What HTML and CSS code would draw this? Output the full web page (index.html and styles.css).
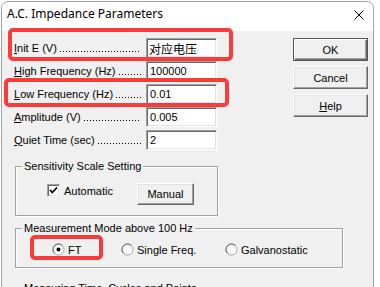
FILE: index.html
```html
<!DOCTYPE html>
<html lang="en">
<head>
    <meta charset="UTF-8">
    <meta name="viewport" content="width=device-width, initial-scale=1.0">
    <title>A.C. Impedance Parameters</title>
    <link rel="stylesheet" href="styles.css">
</head>
<body>
    <div class="window">
        <div class="titlebar">
            <span class="title">A.C. Impedance Parameters</span>
            <svg class="close" width="10" height="10" viewBox="0 0 10 10">
                <path d="M0.5 0.5 L9.5 9.5 M9.5 0.5 L0.5 9.5" stroke="#000" stroke-width="1" fill="none"/>
            </svg>
        </div>

        <div class="client">
            <div class="top">
                <div class="fields">
                    <div class="row">
                        <label class="lbl"><span><u>I</u>nit E (V)</span><span class="leader"></span></label>
                        <input class="edit edit-cjk" type="text" value="对应电压">
                    </div>
                    <div class="row">
                        <label class="lbl"><span><u>H</u>igh Frequency (Hz)</span><span class="leader"></span></label>
                        <input class="edit" type="text" value="100000">
                    </div>
                    <div class="row">
                        <label class="lbl"><span><u>L</u>ow Frequency (Hz)</span><span class="leader"></span></label>
                        <input class="edit" type="text" value="0.01">
                    </div>
                    <div class="row">
                        <label class="lbl"><span><u>A</u>mplitude (V)</span><span class="leader"></span></label>
                        <input class="edit" type="text" value="0.005">
                    </div>
                    <div class="row">
                        <label class="lbl"><span><u>Q</u>uiet Time (sec)</span><span class="leader"></span></label>
                        <input class="edit" type="text" value="2">
                    </div>
                </div>
                <div class="buttons">
                    <button class="btn btn-default">OK</button>
                    <button class="btn">Cancel</button>
                    <button class="btn"><u>H</u>elp</button>
                </div>
            </div>

            <div class="group group-sens">
                <span class="group-title">Sensitivity Scale Setting</span>
                <div class="group-row">
                    <label class="check">
                        <span class="box">
                            <svg width="9" height="9" viewBox="0 0 9 9">
                                <path d="M1 4 L3.3 6.5 L8 1.5" stroke="#000" stroke-width="1.8" fill="none"/>
                            </svg>
                        </span>
                        Automatic
                    </label>
                    <button class="btn btn-small">Manual</button>
                </div>
            </div>

            <div class="group group-mode">
                <span class="group-title">Measurement Mode above 100 Hz</span>
                <div class="group-row">
                    <label class="radio radio-ft">
                        <svg width="13" height="13" viewBox="0 0 13 13">
                            <circle cx="6.5" cy="6.5" r="5.5" fill="#fff" stroke="#a0a0a0"/>
                            <path d="M2.6 10.4 A5.5 5.5 0 0 1 10.4 2.6" stroke="#696969" fill="none"/>
                            <circle cx="6.5" cy="6.5" r="2" fill="#000"/>
                        </svg>
                        FT
                    </label>
                    <label class="radio radio-single">
                        <svg width="13" height="13" viewBox="0 0 13 13">
                            <circle cx="6.5" cy="6.5" r="5.5" fill="#fff" stroke="#a0a0a0"/>
                            <path d="M2.6 10.4 A5.5 5.5 0 0 1 10.4 2.6" stroke="#696969" fill="none"/>
                        </svg>
                        Single Freq.
                    </label>
                    <label class="radio">
                        <svg width="13" height="13" viewBox="0 0 13 13">
                            <circle cx="6.5" cy="6.5" r="5.5" fill="#fff" stroke="#a0a0a0"/>
                            <path d="M2.6 10.4 A5.5 5.5 0 0 1 10.4 2.6" stroke="#696969" fill="none"/>
                        </svg>
                        Galvanostatic
                    </label>
                </div>
            </div>

            <div class="group group-time">
                <span class="group-title">Measuring Time, Cycles and Points</span>
            </div>
        </div>

        <!-- red annotation frames -->
        <div class="mark mark-init"></div>
        <div class="mark mark-low"></div>
        <div class="mark mark-ft"></div>
    </div>
</body>
</html>
```

FILE: styles.css
```css
html, body {
    height: 287px;
    overflow: hidden;
}

body {
    margin: 0;
    background-color: white;
    font-family: "Liberation Sans", Arial, sans-serif;
    font-size: 11px;
    color: black;
}

.window {
    position: relative;
    width: 373px;
    height: 330px;
    margin: 1px 0 0 1px;
    box-sizing: border-box;
    border: 1px solid #a3a3a3;
    border-radius: 7px 7px 0 0;
    background-color: #f0f0f0;
}

.titlebar {
    display: flex;
    justify-content: space-between;
    align-items: flex-start;
    height: 29px;
    box-sizing: border-box;
    padding: 4px 5px 0 5px;
    background-color: white;
    border-radius: 7px 7px 0 0;
}

.title {
    font-family: "Noto Sans", sans-serif;
    font-size: 12px;
    line-height: 16px;
}

.close {
    margin-top: 4px;
    margin-right: 4px;
}

.client {
    padding: 7px 0 0 12px;
}

.top {
    display: flex;
    gap: 76px;
}

.fields {
    display: flex;
    flex-direction: column;
    gap: 3px;
}

.row {
    display: flex;
    align-items: center;
    height: 20px;
}

.lbl {
    display: flex;
    align-items: center;
    width: 132px;
    height: 13px;
    line-height: 13px;
    white-space: nowrap;
}

/* dotted leader between label and edit box */
.leader {
    flex: 1;
    height: 13px;
    margin: 0 5px 0 3px;
    background-image: linear-gradient(to right, #000 1px, transparent 1px);
    background-size: 3px 1px;
    background-repeat: repeat-x;
    background-position: 0 9px;
}

.edit {
    width: 71px;
    height: 20px;
    box-sizing: border-box;
    margin: 0;
    padding: 0 3px;
    font-family: "Liberation Sans", Arial, sans-serif;
    font-size: 11px;
    color: black;
    background-color: white;
    border-top: 1px solid #a0a0a0;
    border-left: 1px solid #a0a0a0;
    border-right: 1px solid white;
    border-bottom: 1px solid white;
    box-shadow: inset 1px 1px 0 #696969, inset -1px -1px 0 #e3e3e3;
    outline: none;
}

.edit-cjk {
    font-family: "Liberation Sans", "Noto Sans CJK SC", sans-serif;
    font-size: 12px;
    padding-left: 2px;
}

.buttons {
    display: flex;
    flex-direction: column;
    gap: 5px;
}

.btn {
    width: 75px;
    height: 23px;
    box-sizing: border-box;
    margin: 0;
    padding: 0;
    font-family: "Liberation Sans", Arial, sans-serif;
    font-size: 11px;
    color: black;
    background-color: #f0f0f0;
    border-top: 1px solid white;
    border-left: 1px solid white;
    border-right: 1px solid #696969;
    border-bottom: 1px solid #696969;
    box-shadow: inset -1px -1px 0 #a0a0a0, inset 1px 1px 0 #e3e3e3;
}

.btn-default {
    border: 1px solid #555;
    box-shadow: inset 1px 1px 0 white, inset -1px -1px 0 #696969, inset -2px -2px 0 #a0a0a0;
}

.btn-small {
    width: 57px;
    height: 22px;
}

.group {
    box-sizing: border-box;
    margin-left: 1px;
    border: 1px solid #a0a0a0;
    box-shadow: inset 1px 1px 0 white, 1px 1px 0 white;
}

.group-title {
    display: block;
    width: fit-content;
    margin: -7px 0 0 6px;
    padding: 0 2px;
    line-height: 12px;
    background-color: #f0f0f0;
}

.group-sens {
    width: 203px;
    margin-top: 16px;
    padding: 0 0 10px 31px;
}

.group-sens .group-title {
    margin-left: -25px;
    margin-bottom: 11px;
}

.group-mode {
    width: 328px;
    margin-top: 12px;
    padding: 0 0 11px 36px;
}

.group-mode .group-title {
    margin-left: -30px;
    margin-bottom: 9px;
}

.group-time {
    width: 328px;
    height: 40px;
    margin-top: 20px;
    padding-left: 6px;
}

.group-time .group-title {
    margin-left: 0;
}

.group-row {
    display: flex;
    align-items: flex-start;
}

.check {
    display: flex;
    align-items: center;
    gap: 4px;
    width: 90px;
    height: 13px;
    margin-top: 1px;
}

.box {
    display: flex;
    align-items: center;
    justify-content: center;
    width: 13px;
    height: 13px;
    box-sizing: border-box;
    background-color: white;
    border-top: 1px solid #a0a0a0;
    border-left: 1px solid #a0a0a0;
    border-right: 1px solid white;
    border-bottom: 1px solid white;
    box-shadow: inset 1px 1px 0 #696969, inset -1px -1px 0 #e3e3e3;
}

.radio {
    display: flex;
    align-items: center;
    gap: 3px;
    height: 13px;
}

.radio-ft {
    width: 69px;
}

.radio-single {
    width: 104px;
}

.mark {
    position: absolute;
    box-sizing: border-box;
    border: 4px solid #f83c3c;
    border-radius: 5px;
}

.mark-init {
    left: 6px;
    top: 26px;
    width: 225px;
    height: 33px;
}

.mark-low {
    left: 2px;
    top: 76px;
    width: 225px;
    height: 29px;
}

.mark-ft {
    left: 28px;
    top: 233px;
    width: 73px;
    height: 25px;
}
```
